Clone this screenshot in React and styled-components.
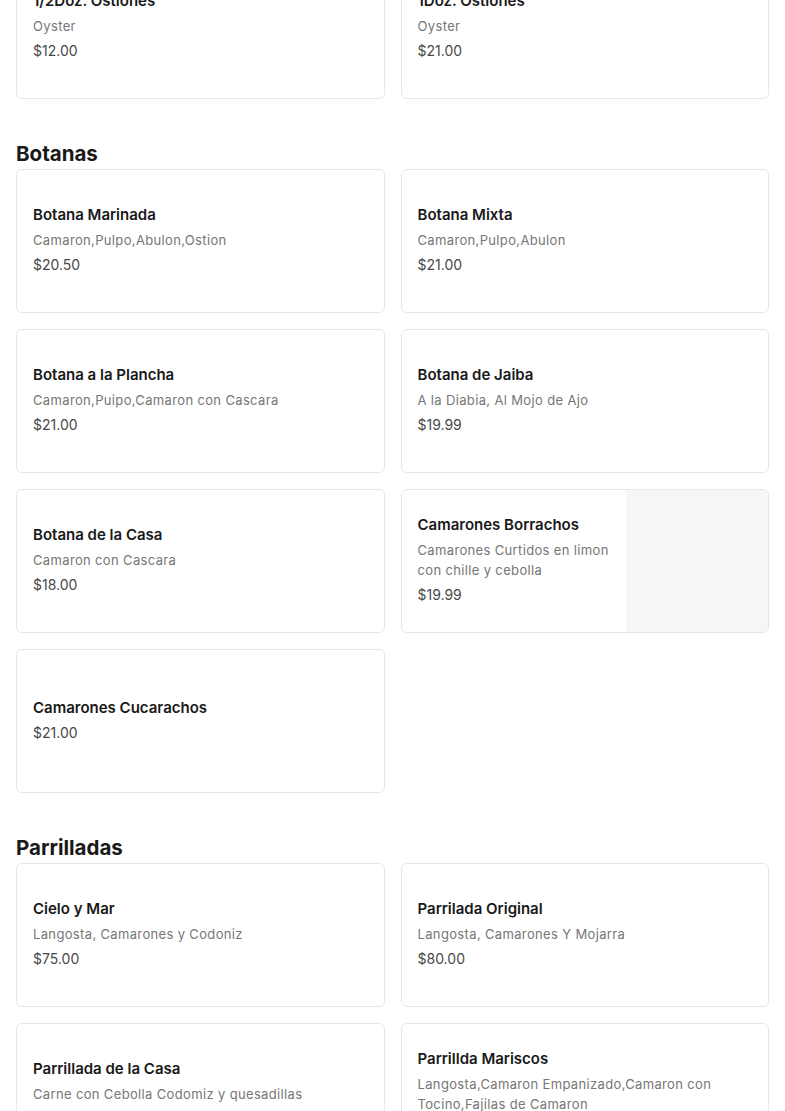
import React from 'react';
import styled, { createGlobalStyle } from 'styled-components';

const GlobalStyle = createGlobalStyle`
  body {
    margin: 0;
    background: #ffffff;
    font-family: "Inter", "Liberation Sans", sans-serif;
    color: #191919;
  }
`;

const sections = [
  {
    name: null,
    items: [
      { title: '1/2Doz. Ostiones', desc: 'Oyster', price: '$12.00' },
      { title: '1Doz. Ostiones', desc: 'Oyster', price: '$21.00' },
    ],
  },
  {
    name: 'Botanas',
    items: [
      { title: 'Botana Marinada', desc: 'Camaron,Pulpo,Abulon,Ostion', price: '$20.50' },
      { title: 'Botana Mixta', desc: 'Camaron,Pulpo,Abulon', price: '$21.00' },
      { title: 'Botana a la Plancha', desc: 'Camaron,Puipo,Camaron con Cascara', price: '$21.00' },
      { title: 'Botana de Jaiba', desc: 'A la Diabia, Al Mojo de Ajo', price: '$19.99' },
      { title: 'Botana de la Casa', desc: 'Camaron con Cascara', price: '$18.00' },
      { title: 'Camarones Borrachos', desc: 'Camarones Curtidos en limon con chille y cebolla', price: '$19.99', image: true },
      { title: 'Camarones Cucarachos', price: '$21.00' },
    ],
  },
  {
    name: 'Parrilladas',
    items: [
      { title: 'Cielo y Mar', desc: 'Langosta, Camarones y Codoniz', price: '$75.00' },
      { title: 'Parrilada Original', desc: 'Langosta, Camarones Y Mojarra', price: '$80.00' },
      { title: 'Parrillada de la Casa', desc: 'Carne con Cebolla Codomiz y quesadillas', price: '$90.00' },
      { title: 'Parrillda Mariscos', desc: 'Langosta,Camaron Empanizado,Camaron con Tocino,Fajilas de Camaron', price: '$95.00' },
    ],
  },
];

const Page = styled.div`
  padding: 0 16px 40px;
  margin-top: -45px;
`;

const Section = styled.section`
  & + & {
    margin-top: 41px;
  }
`;

const Heading = styled.h2`
  margin: 0 0 1px;
  font-size: 20.5px;
  line-height: 28px;
  font-weight: 700;
  color: #191919;
`;

const Grid = styled.div`
  display: grid;
  grid-template-columns: 1fr 1fr;
  gap: 16px;
`;

const Card = styled.div`
  display: flex;
  height: 144px;
  box-sizing: border-box;
  border: 1px solid #e7e7e7;
  border-radius: 6px;
  overflow: hidden;
  background: #ffffff;
`;

const Info = styled.div`
  flex: 1;
  min-width: 0;
  padding: 13px 16px 17px;
  display: flex;
  flex-direction: column;
  justify-content: center;
`;

const Title = styled.div`
  font-size: 15px;
  line-height: 24px;
  font-weight: 600;
  color: #191919;
  margin-bottom: 3px;
`;

const Desc = styled.div`
  font-size: 13px;
  line-height: 20px;
  letter-spacing: 0.35px;
  color: #767676;
  margin-bottom: 5px;
`;

const Price = styled.div`
  font-size: 14px;
  line-height: 20px;
  color: #494949;
`;

const Thumb = styled.div`
  width: 142px;
  flex-shrink: 0;
  background: #f6f6f6;
`;

const MenuCard = ({ item }) => (
  <Card>
    <Info>
      <Title>{ item.title }</Title>
      { item.desc && <Desc>{ item.desc }</Desc> }
      <Price>{ item.price }</Price>
    </Info>
    { item.image && <Thumb /> }
  </Card>
);

const App = () => (
  <>
    <GlobalStyle />
    <Page>
      { sections.map((section, i) => (
        <Section key={ i }>
          { section.name && <Heading>{ section.name }</Heading> }
          <Grid>
            { section.items.map(item => <MenuCard key={ item.title } item={ item } />) }
          </Grid>
        </Section>
      )) }
    </Page>
  </>
);

export default App;
